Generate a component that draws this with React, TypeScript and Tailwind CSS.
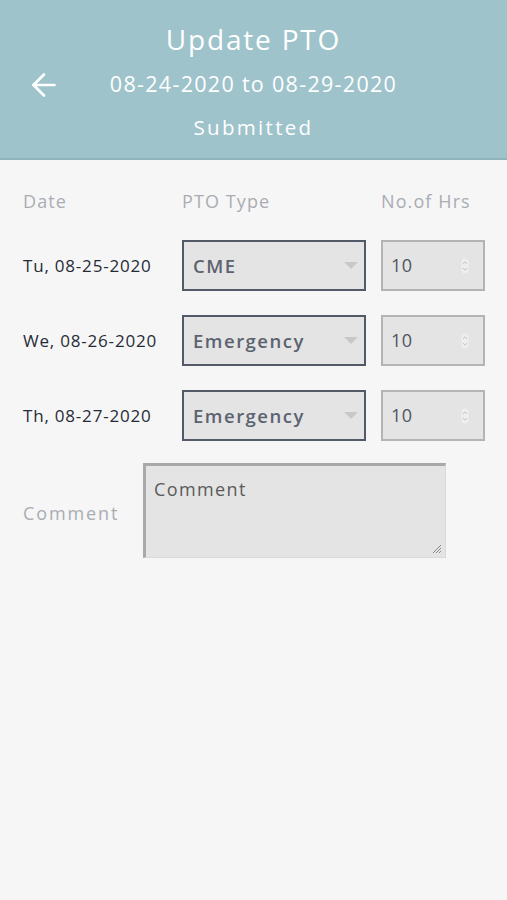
import { ArrowLeft } from "lucide-react";

const rows = [
  { date: "Tu, 08-25-2020", type: "CME", hrs: "10" },
  { date: "We, 08-26-2020", type: "Emergency", hrs: "10" },
  { date: "Th, 08-27-2020", type: "Emergency", hrs: "10" },
];

function Spinner() {
  return (
    <svg width="8" height="16" viewBox="0 0 8 16" className="text-[#c4c4c4]">
      <rect x="0.5" y="0.5" width="7" height="15" rx="3.5" fill="#eeeeee" />
      <path d="M2 6 L4 3.8 L6 6" fill="none" stroke="currentColor" strokeWidth="1" />
      <path d="M2 10 L4 12.2 L6 10" fill="none" stroke="currentColor" strokeWidth="1" />
    </svg>
  );
}

export default function App() {
  return (
    <div className="flex h-[900px] w-[507px] flex-col bg-[#f6f6f6] font-['Open_Sans',sans-serif]">
      <header className="flex h-[160px] shrink-0 flex-col items-center border-b-2 border-[#8fb4bb] bg-[#9ec3cb] pt-[20px] text-white">
        <h1 className="text-[28px] leading-[38px] tracking-[1.8px]">Update PTO</h1>
        <div className="relative mt-[8px] flex w-full justify-center">
          <ArrowLeft className="absolute top-[1px] left-[26px] h-[36px] w-[36px]" strokeWidth={1.8} />
          <span className="text-[21.5px] leading-[36px] tracking-[1.3px]">08-24-2020 to 08-29-2020</span>
        </div>
        <span className="mt-[10px] text-[20.5px] leading-[30px] tracking-[2.3px]">Submitted</span>
      </header>

      <main className="flex flex-col px-[23px] pt-[27px]">
        <div className="flex text-[18px] leading-[28px] tracking-[1.1px] text-[#a9adb3]">
          <span className="w-[159px] shrink-0">Date</span>
          <span className="w-[199px] shrink-0">PTO Type</span>
          <span>No.of Hrs</span>
        </div>

        <div className="mt-[25px] flex flex-col gap-[24px]">
          {rows.map((row) => (
            <div key={row.date} className="flex items-center">
              <span className="w-[159px] shrink-0 text-[17px] tracking-[0.8px] text-[#262b36]">{row.date}</span>
              <div className="flex h-[51px] w-[184px] shrink-0 items-center justify-between border-2 border-[#525a68] bg-[#e4e4e4] pr-[6px] pl-[9px]">
                <span className="text-[18.5px] font-semibold tracking-[1.5px] text-[#5c6370]">{row.type}</span>
                <svg width="14" height="8" viewBox="0 0 14 8">
                  <path d="M0 0 H14 L7 7 Z" fill="#c8c8c8" />
                </svg>
              </div>
              <div className="ml-[15px] flex h-[51px] w-[104px] shrink-0 items-center justify-between border-2 border-[#b4b4b4] bg-[#e4e4e4] pr-[14px] pl-[8px]">
                <span className="text-[18px] tracking-[0.5px] text-[#50565f]">{row.hrs}</span>
                <Spinner />
              </div>
            </div>
          ))}
        </div>

        <div className="mt-[22px] flex items-center">
          <span className="w-[120px] shrink-0 pt-[6px] text-[18px] tracking-[1.9px] text-[#a9adb3]">Comment</span>
          <div className="relative h-[95px] w-[303px] shrink-0 border-t-[3px] border-r border-b border-l-[3px] border-t-[#a9a9a9] border-r-[#dadada] border-b-[#dadada] border-l-[#a9a9a9] bg-[#e4e4e4] px-[8px] pt-[10px]">
            <span className="text-[18px] tracking-[1.4px] text-[#5a5a5a]">Comment</span>
            <svg width="12" height="12" viewBox="0 0 12 12" className="absolute right-[3px] bottom-[3px]">
              <path d="M11 3 L3 11 M11 6 L6 11 M11 9 L9 11" stroke="#8a8a8a" strokeWidth="1" />
            </svg>
          </div>
        </div>
      </main>
    </div>
  );
}
